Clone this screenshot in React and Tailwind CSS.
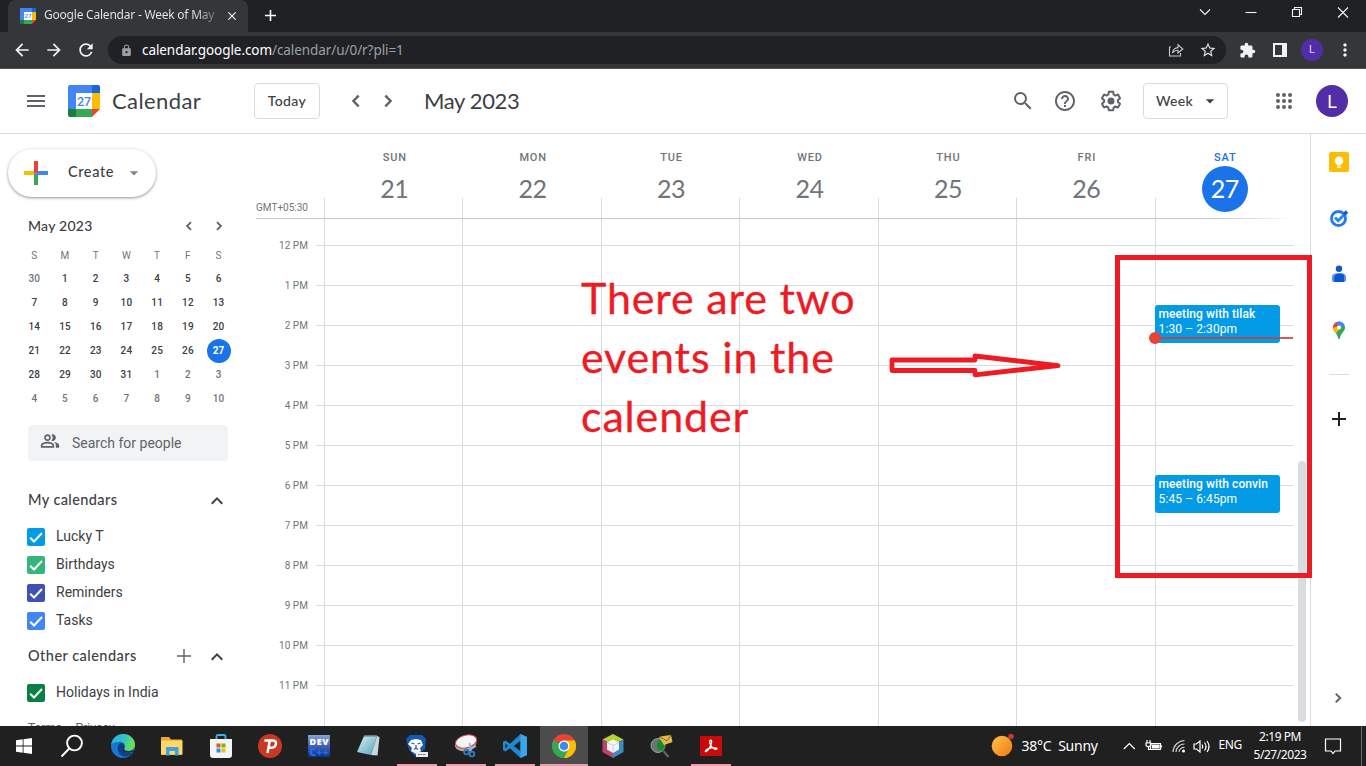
import React from "react";
import {
  MdSearch, MdHelpOutline, MdMenu, MdArrowBack, MdArrowForward, MdRefresh, MdLock,
  MdExtension, MdMoreVert, MdClose, MdAdd, MdOutlinePeopleAlt,
  MdStarBorder, MdExpandLess, MdArrowDropDown,
} from "react-icons/md";

const GS = "font-['Lato','Roboto',sans-serif]";

function Chevron({ left, className }) {
  return (
    <svg viewBox="0 0 24 24" className={`shrink-0 ${className}`} fill="none" stroke="#5f6368" strokeWidth="2.400">
      <path d={left ? "M14.700 6.700L9.400 12L14.700 17.300" : "M9.300 6.700L14.600 12L9.300 17.300"} />
    </svg>
  );
}

function CalendarLogo({ className }) {
  return (
    <svg viewBox="0 0 32 32" className={className}>
      <path d="M2 0H24V8H8V24H0V2A2 2 0 0 1 2 0Z" fill="#4285f4" />
      <path d="M24 0H30A2 2 0 0 1 32 2V8H24Z" fill="#1967d2" />
      <path d="M24 8H32V24H24Z" fill="#fbbc04" />
      <path d="M8 24H24V32H8Z" fill="#34a853" />
      <path d="M0 24H8V32H2A2 2 0 0 1 0 30Z" fill="#188038" />
      <path d="M24 24H32L24 32Z" fill="#ea4335" />
      <path d="M8 8H24V24H8Z" fill="#fff" />
      <text x="16" y="20.6" textAnchor="middle" fontSize="12.5" fontWeight="500" fontFamily="Roboto" fill="#4285f4">27</text>
    </svg>
  );
}

function BrowserChrome() {
  return (
    <div className="shrink-0 font-['Noto_Sans','Open_Sans',sans-serif]">
      <div className="flex h-8 bg-[#202124] pl-2">
        <div className="flex h-8 w-60 items-center rounded-t-lg bg-[#35363a] pl-3 pr-[9px]">
          <CalendarLogo className="size-4" />
          <div className="-mt-0.5 ml-2 mr-auto whitespace-nowrap bg-linear-to-r from-[#e8eaed] from-88% to-[#77787b] bg-clip-text text-[12px] tracking-[-0.22px] text-transparent">
            Google Calendar - Week of May
          </div>
          <MdClose className="size-[14px] shrink-0 text-[#f1f3f4]" />
        </div>
        <div className="flex w-11 items-center justify-center pb-0.5">
          <MdAdd className="size-[19px] text-white" />
        </div>
        <svg viewBox="0 0 166 24" className="ml-auto mr-3 mt-0 h-6 w-[166px]" fill="none" stroke="#f1f3f4" strokeWidth="1.1">
          <path d="M12 9.500l5 5 5-5" />
          <path d="M57.500 12.500h11" />
          <path d="M104.500 9.500h7v7h-7zM106.500 9.500v-2h7v7h-2" />
          <path d="M150 7.500l10 10M160 7.500l-10 10" />
        </svg>
      </div>
      <div className="flex h-[37px] items-center border-b border-[#505155] bg-[#35363a] pl-3 text-[#f1f3f4]">
        <MdArrowBack className="size-5" />
        <MdArrowForward className="ml-3 size-5" />
        <MdRefresh className="ml-3 size-5" />
        <div className="ml-3 flex h-7 w-[1118px] items-center rounded-full bg-[#202124] pl-3 pr-[9px]">
          <MdLock className="size-[13px] text-[#9aa0a6]" />
          <div className="ml-[9px] text-[13.5px] tracking-[-0.07px] text-[#9aa0a6]">
            <span className="text-white">calendar.google.com</span>/calendar/u/0/r?pli=1
          </div>
          <svg viewBox="0 0 16 16" className="ml-auto size-4" fill="none" stroke="#c4c7cb" strokeWidth="1.1">
            <path d="M3 5H1.500V14H12.500V11M4.500 11C5 7.500 7 5.800 10 5.600V2.800L14.800 7L10 11V8.300C7.500 8.300 6 9 4.500 11Z" />
          </svg>
          <MdStarBorder className="ml-[15px] size-[18px] text-[#dadce0]" />
        </div>
        <MdExtension className="ml-[13px] size-[17px]" />
        <svg viewBox="0 0 14 14" className="ml-[17px] size-[14px]">
          <path d="M0 0H14V14H0ZM2 2V12H9V2Z" fill="#f1f3f4" fillRule="evenodd" />
        </svg>
        <div className="ml-[14px] flex size-[22px] items-center justify-center rounded-full bg-[#512da8] font-['Roboto'] text-[11px] text-[#e0d7f3]">L</div>
        <MdMoreVert className="ml-3 size-5" />
      </div>
    </div>
  );
}

function Header() {
  return (
    <div className={`flex h-[65px] shrink-0 items-center border-b border-[#dadce0] pl-[18px] pr-[18px] text-[#3c4043] ${GS}`}>
      <div className="flex w-9 justify-center"><MdMenu className="size-6 text-[#5f6368]" /></div>
      <CalendarLogo className="ml-[14px] size-8" />
      <div className="-mt-0.5 ml-3 w-[142px] text-[22px] tracking-[0.4px]">Calendar</div>
      <div className="flex h-9 w-[66px] items-center justify-center rounded border border-[#dadce0] pb-0.5 text-[14px] font-medium tracking-[0.4px]">Today</div>
      <div className="ml-5 flex w-8 justify-center"><Chevron left className="size-6" /></div>
      <div className="flex w-8 justify-center"><Chevron className="size-6" /></div>
      <div className="-mt-0.5 ml-5 text-[22px] tracking-[-0.35px]">May 2023</div>
      <div className="ml-auto flex items-center text-[#5f6368]">
        <div className="flex w-9 justify-center"><MdSearch className="size-6" /></div>
        <div className="ml-[6px] flex w-9 justify-center"><MdHelpOutline className="size-6" /></div>
        <div className="ml-[10px] flex w-9 justify-center">
          <svg viewBox="0 0 24 24" className="size-6" fill="currentColor">
            <path d="M13.850 22.250h-3.700c-.74 0-1.360-.54-1.450-1.270l-.27-1.890c-.27-.14-.53-.29-.79-.46l-1.800.72c-.7.26-1.470-.03-1.810-.65L2.200 15.530c-.35-.66-.2-1.440.36-1.880l1.530-1.190c-.01-.15-.02-.3-.02-.46 0-.15.01-.31.02-.46l-1.520-1.190c-.59-.45-.74-1.260-.37-1.880l1.850-3.190c.34-.62 1.110-.9 1.790-.63l1.810.73c.26-.17.52-.32.78-.46l.27-1.910c.09-.7.71-1.250 1.440-1.250h3.700c.74 0 1.360.54 1.450 1.270l.27 1.890c.27.14.53.29.79.46l1.800-.72c.71-.26 1.480.03 1.820.65l1.840 3.180c.36.66.2 1.440-.36 1.880l-1.520 1.190c.01.15.02.3.02.46s-.01.31-.02.46l1.520 1.190c.56.45.72 1.230.37 1.860l-1.860 3.220c-.34.62-1.110.9-1.800.63l-1.800-.72c-.26.17-.52.32-.78.46l-.27 1.910c-.1.68-.72 1.220-1.460 1.220zm-3.230-2h2.760l.37-2.550.53-.22c.44-.18.88-.44 1.340-.78l.45-.34 2.380.96 1.380-2.400-2.030-1.580.07-.56c.03-.26.06-.51.06-.78s-.03-.53-.06-.78l-.07-.56 2.030-1.580-1.390-2.400-2.390.96-.45-.35c-.42-.32-.87-.58-1.330-.77l-.52-.22-.37-2.550h-2.760l-.37 2.550-.53.21c-.44.19-.88.44-1.340.79l-.45.33-2.380-.95-1.390 2.390 2.030 1.580-.07.56a7 7 0 0 0-.06.79c0 .26.02.53.06.78l.07.56-2.030 1.580 1.380 2.400 2.390-.96.45.35c.43.33.86.58 1.330.77l.53.22.38 2.550z" />
            <circle cx="12" cy="12" r="3.5" />
          </svg>
        </div>
        <div className="ml-[14px] flex h-9 w-[85px] items-center rounded border border-[#dadce0] pl-3 text-[14px] font-medium tracking-[0.3px] text-[#3c4043]">
          <span className="-mt-0.5">Week</span><MdArrowDropDown className="ml-auto mr-[7px] size-5 text-[#3c4043]" />
        </div>
        <div className="ml-[38px] flex w-9 justify-center">
          <svg viewBox="0 0 24 24" className="size-6" fill="currentColor">
            {[6, 12, 18].map((y) => [6, 12, 18].map((x) => <circle key={`${x}-${y}`} cx={x} cy={y} r="2" />))}
          </svg>
        </div>
        <div className="ml-[14px] flex size-8 items-center justify-center rounded-full bg-[#512da8] pt-px font-['Roboto'] text-[18px] text-white">L</div>
      </div>
    </div>
  );
}

const MINI_DAYS = [30, ...Array.from({ length: 31 }, (_, i) => i + 1), ...Array.from({ length: 10 }, (_, i) => i + 1)];

function CheckItem({ color, label }) {
  return (
    <div className="flex h-7 items-center pl-[27px] text-[14px] text-[#3c4043]">
      <div className={`flex size-[18px] items-center justify-center rounded-[2px] ${color}`}>
        <svg viewBox="0 0 18 18" className="size-[18px]" fill="none" stroke="#fff" strokeWidth="2"><path d="M3.200 9.800L7 13.500L15 5" /></svg>
      </div>
      <div className="-mt-0.5 ml-[11px]">{label}</div>
    </div>
  );
}

function Sidebar() {
  return (
    <div className="flex w-64 shrink-0 flex-col overflow-hidden pt-[15px] font-['Roboto',sans-serif]">
      <div className="ml-2 flex h-12 w-[148px] shrink-0 items-center rounded-full bg-white pl-[10px] shadow-[0_1px_2px_0_rgba(60,64,67,0.35),0_1px_3px_1px_rgba(60,64,67,0.18)]">
        <svg viewBox="0 0 36 36" className="size-9">
          <path d="M16 6h4v12h-4z" fill="#ea4335" />
          <path d="M16 20h4v10h-4z" fill="#34a853" />
          <path d="M20 16h10v4H20z" fill="#4285f4" />
          <path d="M6 16h12l-2 4H6z" fill="#fbbc04" />
          <path d="M16 16h4l-4 4z" fill="#ea4335" />
          <path d="M16 20l4-4v4z" fill="#4285f4" />
        </svg>
        <div className={`-mt-[2px] ml-[14px] text-[14.5px] font-medium tracking-[0.6px] text-[#3c4043] ${GS}`}>Create</div>
        <MdArrowDropDown className="ml-auto mr-3 size-5 text-[#80868b]" />
      </div>
      <div className={`mt-[14px] flex h-[30px] shrink-0 items-center pl-7 text-[14px] font-medium tracking-[0.25px] text-[#3c4043] ${GS}`}>
        <span className="-mt-0.5">May 2023</span>
        <Chevron left className="ml-auto size-[18px]" />
        <Chevron className="ml-3 mr-7 size-[18px]" />
      </div>
      <div className="ml-[19px] mt-0.5 grid w-[215px] shrink-0 grid-cols-7 text-center text-[10px] font-medium leading-6 tracking-[0.2px] text-[#3c4043]">
        {["S", "M", "T", "W", "T", "F", "S"].map((d, i) => (
          <div key={i} className="h-6 pt-px font-normal text-[#70757a]">{d}</div>
        ))}
        {MINI_DAYS.map((d, i) =>
          i === 27 ? (
            <div key={i} className="mx-auto size-6 rounded-full bg-[#1a73e8] font-bold text-white">{d}</div>
          ) : (
            <div key={i} className={i === 0 || i > 31 ? "text-[#70757a]" : ""}>{d}</div>
          )
        )}
      </div>
      <div className="ml-7 mt-[14px] flex h-9 w-[200px] shrink-0 items-center rounded bg-[#f1f3f4] pl-3 text-[14px] text-[#5f6368]">
        <MdOutlinePeopleAlt className="-mt-1 size-5" />
        <div className="ml-3">Search for people</div>
      </div>
      <div className={`mt-[26px] flex h-7 shrink-0 items-center pl-7 text-[14.5px] font-medium tracking-[0.4px] text-[#3c4043] ${GS}`}>
        <span className="-mt-0.5">My calendars</span><MdExpandLess className="ml-auto mr-[27px] size-6" />
      </div>
      <div className="mt-2">
        <CheckItem color="bg-[#039be5]" label="Lucky T" />
        <CheckItem color="bg-[#33b679]" label="Birthdays" />
        <CheckItem color="bg-[#3f51b5]" label="Reminders" />
        <CheckItem color="bg-[#4285f4]" label="Tasks" />
      </div>
      <div className={`mt-2 flex h-7 shrink-0 items-center pl-7 text-[14.5px] font-medium tracking-[0.47px] text-[#3c4043] ${GS}`}>
        <span className="-mt-0.5">Other calendars</span>
        <svg viewBox="0 0 14 14" className="-mt-0.5 ml-auto size-[14px]" stroke="#5f6368" strokeWidth="1.4"><path d="M7 0v14M0 7h14" /></svg>
        <MdExpandLess className="ml-[14px] mr-[27px] size-6" />
      </div>
      <div className="mt-2"><CheckItem color="bg-[#0b8043]" label="Holidays in India" /></div>
      <div className="mt-[13px] flex shrink-0 gap-[3px] pl-7 text-[12px] leading-4 text-[#5f6368]">
        <span>Terms</span><span>–</span><span>Privacy</span>
      </div>
    </div>
  );
}

const DAYS = [["SUN", 21], ["MON", 22], ["TUE", 23], ["WED", 24], ["THU", 25], ["FRI", 26], ["SAT", 27]];
const HOURS = ["12 PM", "1 PM", "2 PM", "3 PM", "4 PM", "5 PM", "6 PM", "7 PM", "8 PM", "9 PM", "10 PM", "11 PM"];

function HourLines() {
  return (
    <>
      <div className="h-[27px] border-b border-[#dadce0]" />
      {HOURS.slice(1).map((h) => <div key={h} className="h-10 border-b border-[#dadce0]" />)}
    </>
  );
}

function Event({ className, title, time }) {
  return (
    <div className={`absolute -left-px h-[38px] w-[125px] rounded-[3px] bg-[#039be5] pl-1 pt-[2px] text-[12px] leading-[15px] text-white ${className}`}>
      <div className="whitespace-nowrap font-medium tracking-[0.08px]">{title}</div>
      <div className="tracking-[0.1px]">{time}</div>
    </div>
  );
}

function WeekGrid() {
  return (
    <div className="relative flex w-[1054px] shrink-0 flex-col font-['Roboto',sans-serif]">
      <div className="flex h-[84px] w-[1037px] shrink-0">
        <div className="flex w-[68px] items-end pb-[3px] text-[10px] text-[#70757a]"><span className="w-[52px] whitespace-nowrap text-right leading-[14px]">GMT+05:30</span></div>
        <div className="grid flex-1 grid-cols-7">
          {DAYS.map(([d, n]) => (
            <div key={d} className="flex">
              <div className="h-5 w-px self-end bg-[#dadce0]" />
              <div className="flex flex-1 flex-col items-center pl-px pt-[17px]">
                <div className={`pl-px text-[11px] font-medium leading-[14px] tracking-[0.8px] ${n === 27 ? "text-[#1a73e8]" : "text-[#70757a]"}`}>{d}</div>
                <div className={`mt-px flex size-[46px] items-center justify-center rounded-full text-[25px] tracking-[-0.5px] ${GS} ${n === 27 ? "bg-[#1a73e8] text-white" : "text-[#70757a]"}`}>{n}</div>
              </div>
            </div>
          ))}
        </div>
      </div>
      <div className="h-px w-[1038px] shrink-0 bg-linear-to-r from-[#c4c7cb] from-93% to-white" />
      <div className="flex h-[507px] w-[1037px] overflow-hidden">
        <div className="w-[60px] pt-[7px]">
          {HOURS.map((h) => (
            <div key={h} className="h-10 pr-2 text-right text-[10px] leading-10 tracking-[0.05px] text-[#70757a]">{h}</div>
          ))}
        </div>
        <div className="w-2"><HourLines /></div>
        <div className="grid flex-1 grid-cols-7">
          {DAYS.map(([d, n]) => (
            <div key={d} className="relative h-[507px] border-l border-[#dadce0]">
              <HourLines />
              {n === 27 && (
                <>
                  <Event className="top-[86px]" title="meeting with tilak" time="1:30 – 2:30pm" />
                  <Event className="top-[256px]" title="meeting with convin" time="5:45 – 6:45pm" />
                  <div className="absolute left-0 top-[118px] h-0.5 w-[138px] bg-[#c5403c]/85" />
                </>
              )}
            </div>
          ))}
        </div>
      </div>
      <div className="absolute left-[893px] top-[198px] size-3 rounded-full bg-[#ea4335]" />
      <div className="absolute left-[1042px] top-[327px] h-[261px] w-2 rounded-full bg-[#dadce0]" />
    </div>
  );
}

function SidePanel() {
  return (
    <div className="flex flex-1 flex-col items-center border-l border-[#dadce0] pt-[18px]">
      <svg viewBox="0 0 20 20" className="size-5">
        <rect width="20" height="20" rx="2" fill="#fbbc04" />
        <path d="M10 4.500a4.200 4.200 0 0 0-2.200 7.800V13.500h4.400V12.300A4.200 4.200 0 0 0 10 4.500ZM8 14.500h4v1.200H8z" fill="#fff" />
      </svg>
      <svg viewBox="0 0 20 20" className="mt-9 size-5" fill="none">
        <circle cx="9.500" cy="10.500" r="7" stroke="#2a7de9" strokeWidth="3" />
        <path d="M6 9.500l3.200 3.200L17.500 4.200" stroke="#2684fc" strokeWidth="3" />
        <path d="M15 6.500L18 3.500" stroke="#0d5bd1" strokeWidth="3.200" />
      </svg>
      <svg viewBox="0 0 20 20" className="mt-9 size-5">
        <circle cx="10" cy="4.800" r="3.200" fill="#0b57d0" />
        <path d="M3 13.500a4 4 0 0 1 4-4h6a4 4 0 0 1 4 4V16a2 2 0 0 1-2 2H5a2 2 0 0 1-2-2z" fill="#5b8def" />
        <path d="M5.200 14a4.500 4.500 0 0 1 4.500-4.500h3.600a3 3 0 0 1 1.700 3V18H5.200z" fill="#0b57d0" />
      </svg>
      <svg viewBox="0 0 20 20" className="mt-9 size-5">
        <clipPath id="pin"><path d="M10 1.500a6 6 0 0 1 6 6c0 4-4.200 5.500-5 10.500a1 1 0 0 1-2 0C8.200 13 4 11.500 4 7.500a6 6 0 0 1 6-6Z" /></clipPath>
        <g clipPath="url(#pin)">
          <path d="M0 0h20v20H0z" fill="#34a853" />
          <path d="M4 0h12v5L10 8z" fill="#4285f4" />
          <path d="M0 0h6l4 7.500-6 2z" fill="#ea4335" />
          <path d="M3 8l4-1 5 1-6 6z" fill="#fbbc04" />
        </g>
        <circle cx="10" cy="7.500" r="2.100" fill="#fff" />
      </svg>
      <div className="mt-[34px] h-px w-5 shrink-0 bg-[#dadce0]" />
      <svg viewBox="0 0 14 14" className="mt-[37px] size-[14px]" stroke="#202124" strokeWidth="2"><path d="M7 0v14M0 7h14" /></svg>
      <Chevron className="mb-[18px] mr-0.5 mt-auto size-5" />
    </div>
  );
}

function Annotations() {
  return (
    <>
      <div className="absolute left-[581px] top-[268px] whitespace-nowrap font-['Lato',sans-serif] text-[43px] leading-[59px] tracking-[0.85px] text-[#ed1c24] [-webkit-text-stroke:0.3px_#ed1c24]">
        <div>There are two</div>
        <div>events in the</div>
        <div>calender</div>
      </div>
      <svg viewBox="0 0 172 26" className="absolute left-[889px] top-[352px] h-[26px] w-[172px]" fill="none" stroke="#ed1c24" strokeWidth="4.800">
        <path d="M3 8H86V4L169 13.600L86 22.800V18.500H3Z" strokeLinejoin="round" />
      </svg>
      <div className="absolute left-[1115px] top-[255px] h-[323px] w-[197px] border-5 border-[#ed1c24]" />
    </>
  );
}

function TaskSlot({ children, active, line }) {
  return (
    <div className="flex h-10 w-[49px] flex-col items-center">
      <div className={`flex h-[38px] w-12 items-center justify-center pt-[2px] ${active ? "bg-[#4c4c4c]" : ""}`}>{children}</div>
      {(line || active) && <div className={`h-0.5 bg-[#f29aa8] ${active ? "w-12" : "w-10"}`} />}
    </div>
  );
}

function Taskbar() {
  return (
    <div className="flex h-10 shrink-0 bg-[#202020] font-['Noto_Sans','Open_Sans',sans-serif] text-white">
      <div className="flex w-12 items-center justify-center">
        <svg viewBox="0 0 16 16" className="size-4" fill="#fff"><path d="M0 2.300L6.700 1.300V7.600H0zM7.500 1.200L16 0V7.600H7.500zM0 8.400H6.700V14.700L0 13.700zM7.500 8.400H16V16L7.500 14.800z" /></svg>
      </div>
      <div className="mr-0.5 flex w-12 items-center justify-center">
        <svg viewBox="0 0 24 24" className="size-6" fill="none" stroke="#fff" strokeWidth="1.900"><circle cx="14.500" cy="9" r="7.400" /><path d="M9.300 14.500L1.500 22.500" /></svg>
      </div>
      <TaskSlot>
        <svg viewBox="0 0 24 24" className="size-6">
          <defs>
            <linearGradient id="edge" x1="0" y1="0" x2="1" y2="0.300"><stop offset="0" stopColor="#2aa9e0" /><stop offset="0.600" stopColor="#35c5c0" /><stop offset="1" stopColor="#6be04a" /></linearGradient>
          </defs>
          <circle cx="12" cy="12" r="12" fill="#1478d0" />
          <path d="M.3 10C1.500 4 6.500 0 12 0c7 0 12 5 12 10.500 0 4-3 6.200-6.500 6.200-3 0-4.500-1.200-4-2.200 1.500-2 .8-6.500-4.500-6.800C5 7.500 2 9 .3 10Z" fill="url(#edge)" />
          <path d="M8.500 9.500c-3 3-2.500 10 3 12.500 4 1.500 8.500 0 11-4-3 1.800-8 1.500-10-1.500-1.500-2-1-4 .5-5.500-1-2-3-2.500-4.500-1.500Z" fill="#123f86" />
          <path d="M13 12c-1.500 1.800-1 4 1 5.200 2.500 1.200 6 .8 8-.5l1 1.300" fill="none" stroke="#202020" strokeWidth="1.200" />
        </svg>
      </TaskSlot>
      <TaskSlot>
        <svg viewBox="0 0 24 22" className="h-[22px] w-6">
          <path d="M1 2h8l2 2.500h11V20H1z" fill="#e8a92e" />
          <path d="M1 5.500h21.500V19.500H1z" fill="#ffd868" />
          <path d="M6 12h12.500v8.500h-3.500V16H9.500v4.500H6z" fill="#3f9fe0" />
        </svg>
      </TaskSlot>
      <TaskSlot>
        <svg viewBox="0 0 24 24" className="size-6">
          <path d="M7.500 6V2.500Q7.500 1 9 1h6q1.500 0 1.500 1.500V6" fill="none" stroke="#35b2e6" strokeWidth="1.800" />
          <path d="M1 5h22v16a3 3 0 0 1-3 3H4a3 3 0 0 1-3-3z" fill="#f4f4f4" />
          <path d="M7.500 9.500h4v4h-4z" fill="#f25022" /><path d="M12.500 9.500h4v4h-4z" fill="#7fba00" />
          <path d="M7.500 14.500h4v4h-4z" fill="#00a4ef" /><path d="M12.500 14.500h4v4h-4z" fill="#ffb900" />
        </svg>
      </TaskSlot>
      <TaskSlot>
        <svg viewBox="0 0 24 24" className="size-6">
          <circle cx="12" cy="12" r="12" fill="#c73a22" />
          <path d="M6.500 6.500h8q4 0 3.400 3.600-.6 3.600-4.400 3.600h-2.300M11.800 6.500L9.500 19" fill="none" stroke="#fff" strokeWidth="2.500" />
        </svg>
      </TaskSlot>
      <TaskSlot>
        <svg viewBox="0 0 22 22" className="size-[22px]" fontFamily="Open Sans" fontWeight="800" textAnchor="middle">
          <defs><linearGradient id="dev" x1="0" y1="0" x2="0" y2="1"><stop offset="0" stopColor="#86a4d8" /><stop offset="0.500" stopColor="#3f62b8" /><stop offset="1" stopColor="#142f86" /></linearGradient></defs>
          <path d="M0 0h22v22H0z" fill="url(#dev)" />
          <text x="11" y="9.500" fontSize="9" fill="#fff" textLength="19">DEV</text>
          <text x="11" y="20.500" fontSize="10" fill="#1673f0" textLength="19">C++</text>
        </svg>
      </TaskSlot>
      <TaskSlot>
        <svg viewBox="0 0 24 22" className="h-[22px] w-6">
          <defs><linearGradient id="note" x1="0" y1="0" x2="1" y2="1"><stop offset="0" stopColor="#d8f0f5" /><stop offset="1" stopColor="#4da3b8" /></linearGradient></defs>
          <path d="M8 1h13l-6 19L1 17z" fill="url(#note)" />
          <path d="M21 1l2.500 1-2 18.500L15 20z" fill="#c9d6da" />
          <path d="M8 1h13" stroke="#8a8f94" strokeWidth="1.500" />
        </svg>
      </TaskSlot>
      <TaskSlot line>
        <svg viewBox="0 0 24 24" className="size-6">
          <path d="M5 1h12l4 4-1 10-9 8-7-7L1 5z" fill="#1657b8" />
          <path d="M6 6l5-1 5 1 2 5-3 3 1 3-5 3-5-3 1-3-4-4z" fill="#fff" />
          <path d="M6.500 9l3 1M15.500 9l-3 1M11 11v3l-2 1.500M11 14l2 1.500" stroke="#1657b8" strokeWidth="1.200" fill="none" />
          <path d="M11 18h12v5H11z" fill="#ececec" /><path d="M13 20.500h8" stroke="#777" strokeWidth="1.200" strokeDasharray="2 .6" />
        </svg>
      </TaskSlot>
      <TaskSlot line>
        <svg viewBox="0 0 24 24" className="size-6">
          <ellipse cx="11.500" cy="10" rx="11" ry="7" fill="#b9a9ac" transform="rotate(-14 11 9)" />
          <ellipse cx="12" cy="7.500" rx="10.800" ry="6.300" fill="#f7f4f4" stroke="#c8414a" strokeWidth="1" transform="rotate(-14 12 7)" />
          <path d="M15.500 9l1.500 8M22 12l-8 5" stroke="#9bb8d0" strokeWidth="1.800" />
          <circle cx="12.500" cy="18" r="2.400" fill="none" stroke="#2d7fc0" strokeWidth="1.800" /><circle cx="18" cy="20" r="2.400" fill="none" stroke="#2d7fc0" strokeWidth="1.800" />
        </svg>
      </TaskSlot>
      <TaskSlot line>
        <svg viewBox="0 0 24 24" className="size-6">
          <path d="M17.500 0L24 3v18l-6.500 3L7 14.200 2.500 17.600 0 16.300V7.700l2.500-1.300L7 9.800z" fill="#1f8ad2" />
          <path d="M17.500 6.800v10.400L10.700 12z" fill="#202020" /><path d="M2.300 9.500v5L5 12z" fill="#202020" />
          <path d="M17.500 0L24 3v18l-6.500 3z" fill="#3aa6ea" />
        </svg>
      </TaskSlot>
      <TaskSlot active>
        <svg viewBox="0 0 24 24" className="size-6">
          <path d="M12 12L1.610 6A12 12 0 0 1 22.390 6z" fill="#ea4335" />
          <path d="M12 12L22.390 6A12 12 0 0 1 12 24z" fill="#fbbc04" />
          <path d="M12 12L12 24A12 12 0 0 1 1.610 6z" fill="#34a853" />
          <path d="M12 6.500H22.600A12 12 0 0 1 12 24L16.800 14.800z" fill="#fbbc04" />
          <path d="M1.610 6L7.200 14.800 12 17.500 16 16 12 24A12 12 0 0 1 1.610 6z" fill="#34a853" />
          <circle cx="12" cy="12" r="5.500" fill="#fff" /><circle cx="12" cy="12" r="4.300" fill="#4285f4" />
        </svg>
      </TaskSlot>
      <TaskSlot>
        <svg viewBox="0 0 24 24" className="size-6">
          <path d="M12 0l10.500 5.500L12 11 1.500 5.500z" fill="#b5d334" />
          <path d="M1.500 5.500L12 11v13L1.500 18z" fill="#c2416b" /><path d="M22.500 5.500L12 11v13l10.500-6z" fill="#3c8bc4" />
          <path d="M12 5.500l6 3v7L12 19l-6-3.500v-7z" fill="#f3f7fa" /><path d="M6 8.500l6 3 6-3M12 11.500V19" stroke="#b4c8d4" strokeWidth=".8" fill="none" />
        </svg>
      </TaskSlot>
      <TaskSlot>
        <svg viewBox="0 0 24 24" className="size-6">
          <circle cx="8" cy="11.500" r="7" fill="#6a746e" stroke="#9aa39e" />
          <path d="M8 6l5 2 2 5-3 4-4-1-1-5z" fill="#168a2c" />
          <path d="M9 3l4-1 8-1 1.500 7L14 11z" fill="#e6b94f" /><path d="M10 3l7 4 4-6" fill="none" stroke="#8c6820" />
          <path d="M13.500 17l5 6" stroke="#666" strokeWidth="2" />
        </svg>
      </TaskSlot>
      <TaskSlot line>
        <svg viewBox="0 0 22 20" className="h-5 w-[22px]">
          <path d="M0 0h22v20H0z" fill="#c80a0a" />
          <path d="M10.500 4.200c2.200-.5 1 4.500-1.200 8-1.800 3-4 4.300-4 3 0-1.500 4.500-3.500 8.500-3.500 4.500 0 3.500 2 1.200 1.500-2.500-.6-5.500-5-5.300-7.500 0-.8.300-1.400.8-1.500Z" fill="none" stroke="#fff" strokeWidth="1.300" />
        </svg>
      </TaskSlot>
      <div className="ml-auto flex items-center">
        <svg viewBox="0 0 24 24" className="mb-0.5 size-6">
          <defs><linearGradient id="sun" x1="0" y1="0" x2="1" y2="1"><stop offset="0" stopColor="#ffc247" /><stop offset="1" stopColor="#f07814" /></linearGradient></defs>
          <circle cx="11" cy="13" r="10.300" fill="url(#sun)" /><circle cx="20" cy="3.500" r="2.800" fill="#c23b36" />
        </svg>
        <div className="mb-0.5 ml-[7px] w-[101px] whitespace-pre text-[14px] tracking-[-0.25px]">38°C  Sunny</div>
        <svg viewBox="0 0 90 20" className="h-5 w-[90px]" fill="none" stroke="#fff" strokeWidth="1.200">
          <path d="M.8 13l5.500-5.500L11.800 13" />
          <path d="M27.500 7.500h10v6h-10zM38.500 9.500v2" /><path d="M29.500 9h6.500v3h-6.500z" fill="#fff" />
          <path d="M24 4v3M27 4v3M23 7h5v2q0 1.500-2.500 1.500T23 9zM25.500 10.500v3h2" />
          <path d="M50 16A12 12 0 0 1 61.500 4.500M53 16A8.500 8.500 0 0 1 61.500 8M56 16A5 5 0 0 1 61.500 11.500" stroke="#ccc" />
          <circle cx="60.500" cy="15" r="1.500" fill="#fff" stroke="none" />
          <path d="M71 8h2.500L77 5v11l-3.500-3H71zM79 8.500q1.500 2 0 4M81.500 6.500q3 4 0 8M84 5q4 5.500 0 11" />
        </svg>
        <div className="mb-0.5 ml-[6px] text-[12px] tracking-[-0.35px]">ENG</div>
        <div className="ml-[10px] w-[56px] text-center text-[12px] leading-[18px] tracking-[-0.45px]">
          <div>2:19 PM</div>
          <div>5/27/2023</div>
        </div>
        <svg viewBox="0 0 18 18" className="ml-[16px] size-[18px]" fill="none" stroke="#fff" strokeWidth="1.200"><path d="M1.500 2h15v12H11l-2 2.500L7 14H1.500z" /></svg>
        <div className="ml-[19px] h-10 w-px bg-[#6a6a6a]" />
        <div className="w-1" />
      </div>
    </div>
  );
}

export default function App() {
  return (
    <div className="relative flex h-[766px] w-[1366px] flex-col overflow-hidden bg-white">
      <BrowserChrome />
      <Header />
      <div className="flex h-[592px] shrink-0">
        <Sidebar />
        <WeekGrid />
        <SidePanel />
      </div>
      <Taskbar />
      <Annotations />
    </div>
  );
}
